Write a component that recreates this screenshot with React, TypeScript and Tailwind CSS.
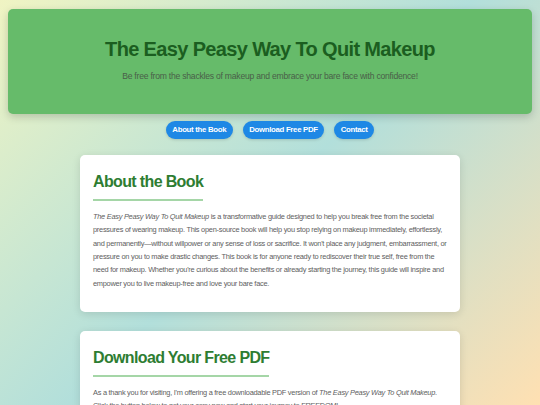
const sections = [
  { id: "about", label: "About the Book" },
  { id: "download", label: "Download Free PDF" },
  { id: "contact", label: "Contact" },
];

function SectionCard({ title, children }: { title: string; children: React.ReactNode }) {
  return (
    <section className="rounded-[5px] bg-white px-[13px] pt-[17px] pb-[22px] shadow-[0_2px_8px_rgba(0,0,0,0.12)]">
      <h2 className="w-fit border-b-2 border-[#a5d6a7] pb-[7px] text-[16px] leading-[20px] font-bold tracking-[-0.64px] text-[#2e7d32]">
        {title}
      </h2>
      {children}
    </section>
  );
}

export default function App() {
  return (
    <div className="min-h-screen bg-fixed bg-[linear-gradient(135deg,#f0f4c3,#b2dfdb,#ffe0b2)] px-2 pt-[9px] pb-8 font-['Liberation_Sans',Arial,sans-serif]">
      {/* Header */}
      <header className="rounded-[5px] bg-[#66bb6a] pt-[28px] pb-[32px] text-center shadow-[0_3px_8px_rgba(0,0,0,0.18)]">
        <h1 className="text-[20px] leading-[24px] font-bold tracking-[-0.65px] text-[#1b5e20]">
          The Easy Peasy Way To Quit Makeup
        </h1>
        <p className="mt-[9px] text-[8.6px] leading-[12px] tracking-[-0.23px] text-[#4a5f49]">
          Be free from the shackles of makeup and embrace your bare face with confidence!
        </p>
      </header>

      {/* Nav */}
      <nav className="mt-[7px] flex justify-center gap-[10px]">
        {sections.map((s) => (
          <a
            key={s.id}
            href={`#${s.id}`}
            className="h-[18px] rounded-full bg-[#1e88e5] px-[6.5px] text-[7.8px] leading-[18px] font-bold tracking-[-0.3px] text-white shadow-[0_1px_3px_rgba(0,0,0,0.15)]"
          >
            {s.label}
          </a>
        ))}
      </nav>

      {/* Sections */}
      <main className="mx-auto mt-[16px] flex max-w-[380px] flex-col gap-[19px]">
        <SectionCard title="About the Book">
          <p className="mt-[9px] text-[7.4px] leading-[13.33px] tracking-[-0.26px] text-[#606060]">
            <em>The Easy Peasy Way To Quit Makeup</em> is a transformative guide designed to help you break free from
            the societal pressures of wearing makeup. This open-source book will help you stop relying on makeup
            immediately, effortlessly, and permanently—without willpower or any sense of loss or sacrifice. It won't
            place any judgment, embarrassment, or pressure on you to make drastic changes. This book is for anyone
            ready to rediscover their true self, free from the need for makeup. Whether you're curious about the
            benefits or already starting the journey, this guide will inspire and empower you to live makeup-free and
            love your bare face.
          </p>
        </SectionCard>

        <SectionCard title="Download Your Free PDF">
          <p className="mt-[9px] text-[7.4px] leading-[13.33px] tracking-[-0.26px] text-[#606060]">
            As a thank you for visiting, I'm offering a free downloadable PDF version of{" "}
            <em>The Easy Peasy Way To Quit Makeup</em>. Click the button below to get your copy now and start your
            journey to FREEDOM!
          </p>
          <button className="mt-[10px] h-[20px] rounded-full bg-[#1e88e5] px-[10px] text-[7.8px] font-bold text-white">
            Download PDF
          </button>
        </SectionCard>

        <SectionCard title="Contact">
          <p className="mt-[9px] text-[7.4px] leading-[13.33px] tracking-[-0.26px] text-[#606060]">
            Have questions or want to share your story? Reach out and let me know how your makeup-free journey is
            going.
          </p>
        </SectionCard>
      </main>
    </div>
  );
}
